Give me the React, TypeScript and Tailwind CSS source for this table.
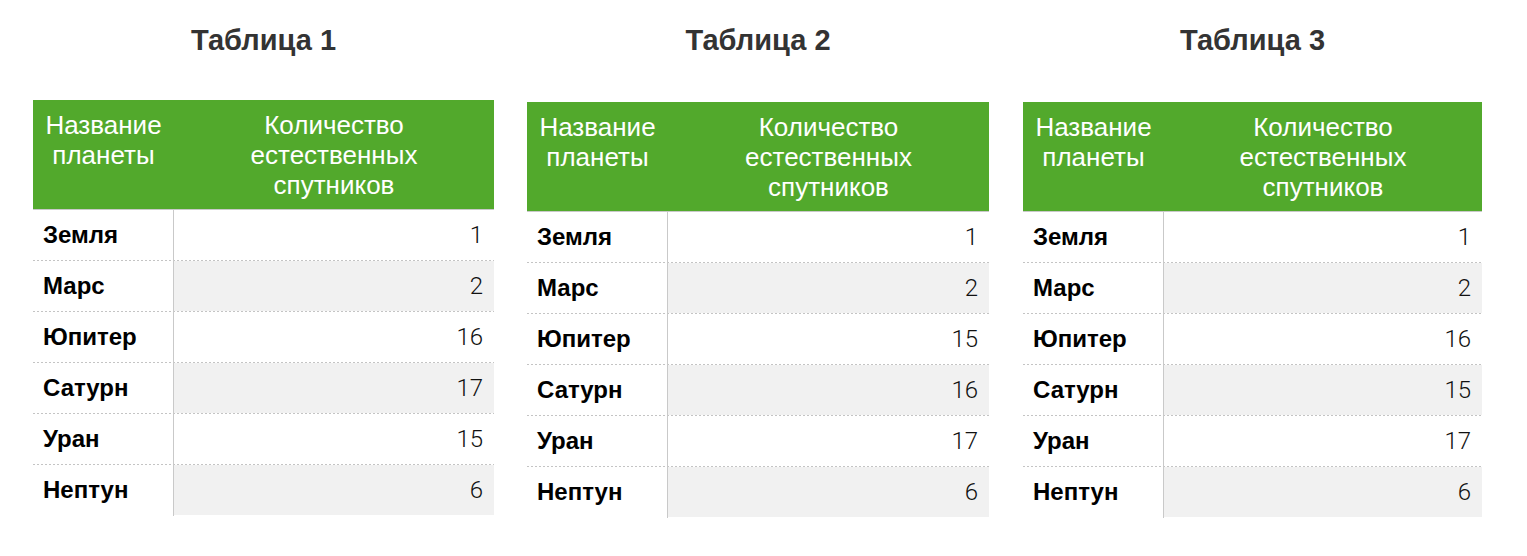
const tables = [
  { title: "Таблица 1", box: "w-[461px]", top: "mt-[45px]", values: [1, 2, 16, 17, 15, 6] },
  { title: "Таблица 2", box: "ml-[33px] w-[462px]", top: "mt-[47px]", values: [1, 2, 15, 16, 17, 6] },
  { title: "Таблица 3", box: "ml-[34px] w-[459px]", top: "mt-[47px]", values: [1, 2, 16, 15, 17, 6] },
];

const planets = ["Земля", "Марс", "Юпитер", "Сатурн", "Уран", "Нептун"];

function PlanetTable({ title, box, top, values }: { title: string; box: string; top: string; values: number[] }) {
  return (
    <div className={`flex flex-col ${box}`}>
      <h2 className="pt-[25px] text-center text-[29px] font-bold leading-[30px] text-[#333333]">
        {title}
      </h2>
      <div className={top}>
        <div className="flex border-b border-[#c9c9c9] bg-[#52a92c] pt-[10px] pb-[9px] text-[26px] leading-[30px] text-white">
          <div className="w-[141px] text-center">
            Название
            <br />
            планеты
          </div>
          <div className="flex-1 text-center">
            Количество
            <br />
            естественных
            <br />
            спутников
          </div>
        </div>
        {planets.map((name, i) => (
          <div
            key={name}
            className={`flex h-[51px] bg-white ${
              i < planets.length - 1
                ? "bg-[repeating-linear-gradient(to_right,#c4c4c4_0_2px,transparent_2px_4px)] bg-[length:100%_1px] bg-bottom bg-no-repeat"
                : ""
            }`}
          >
            <div className="flex w-[141px] items-center border-r border-[#c9c9c9] pl-[10px] pb-px text-[24px] font-bold text-black">
              {name}
            </div>
            <div
              className={`flex h-[50px] flex-1 items-center justify-end pr-[11px] font-['Roboto',sans-serif] text-[24px] font-light text-[#111111] ${
                i % 2 === 1 ? "bg-[#f1f1f1]" : ""
              }`}
            >
              {values[i]}
            </div>
          </div>
        ))}
      </div>
    </div>
  );
}

export default function App() {
  return (
    <div className="flex h-[556px] w-[1527px] bg-white pl-[33px] font-['Liberation_Sans',Helvetica,Arial,sans-serif]">
      {tables.map((t) => (
        <PlanetTable key={t.title} {...t} />
      ))}
    </div>
  );
}
